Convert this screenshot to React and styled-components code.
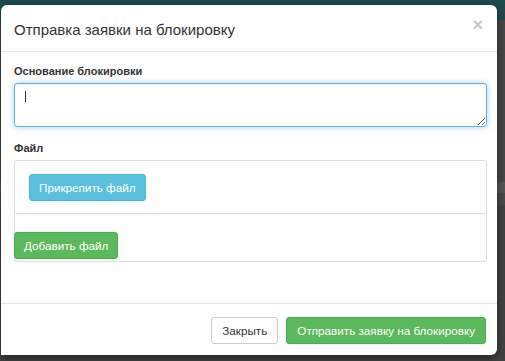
import styled, { createGlobalStyle } from "styled-components";

const GlobalStyle = createGlobalStyle`
  html, body {
    margin: 0;
    height: 100%;
  }
  body {
    font-family: "Liberation Sans", Arial, sans-serif;
    color: #333;
    background:
      linear-gradient(#1e4b4d 0, #1e4b4d 20px, transparent 20px),
      linear-gradient(#474747 0, #474747 182px, #555 182px, #555 193px, #4a4a4a 193px, #4a4a4a 205px, #424242 205px);
    overflow: hidden;
  }
`;

const Backdrop = styled.div`
  padding: 5px 0 0 1px;
`;

const Modal = styled.div`
  width: 496px;
  height: 350px;
  background: #fff;
  border-radius: 6px 6px 6px 0;
  box-shadow: 0 3px 9px rgba(0, 0, 0, 0.5);
  display: flex;
  flex-direction: column;
  box-sizing: border-box;
`;

const Header = styled.div`
  display: flex;
  align-items: center;
  justify-content: space-between;
  height: 46px;
  padding: 0 14px 0 13px;
  border-bottom: 1px solid #e5e5e5;
`;

const Title = styled.h4`
  margin: 0;
  font-size: 15px;
  font-weight: normal;
  color: #333;
  padding-top: 3px;
`;

const CloseButton = styled.button`
  border: 0;
  background: none;
  padding: 0;
  font-family: inherit;
  font-size: 18px;
  font-weight: bold;
  line-height: 1;
  color: #c8c8c8;
  margin-top: -7px;
  cursor: pointer;
`;

const Body = styled.div`
  flex: 1;
  padding: 12px 12px 0 13px;
`;

const Group = styled.div`
  margin-bottom: ${(p) => p.$gap || 0}px;
`;

const Label = styled.label`
  display: block;
  font-size: 11px;
  font-weight: bold;
  line-height: 14px;
  margin-bottom: 5px;
`;

const TextArea = styled.textarea`
  display: block;
  box-sizing: border-box;
  width: 473px;
  height: 44px;
  border: 1px solid #66afe9;
  border-radius: 3px;
  box-shadow: inset 0 1px 1px rgba(0, 0, 0, 0.075), 0 0 6px rgba(102, 175, 233, 0.6);
  outline: none;
  padding: 6px 10px;
  font-family: inherit;
  font-size: 12px;
  resize: vertical;
`;

const Caret = styled.span`
  display: block;
  width: 1px;
  height: 11px;
  background: #333;
  margin: 1px 0 0 0;
`;

const FieldWrap = styled.div`
  position: relative;
`;

const CaretSpot = styled.div`
  position: absolute;
  left: 11px;
  top: 7px;
`;

const FilePanel = styled.div`
  width: 473px;
  box-sizing: border-box;
  border: 1px solid #ddd;
  border-radius: 3px;
  display: flex;
  flex-direction: column;
  gap: 18px;
`;

const InnerPanel = styled.div`
  border-bottom: 1px solid #ddd;
  border-radius: 0 0 3px 3px;
  box-shadow: 0 1px 1px rgba(0, 0, 0, 0.05);
  padding: 13px 14px 12px;
`;

const Button = styled.button`
  font-family: inherit;
  font-size: 11.7px;
  line-height: 17px;
  height: 27px;
  padding: 0 ${(p) => p.$pad || 10}px;
  border-radius: 3px;
  border: 1px solid ${(p) => p.$border};
  background: ${(p) => p.$bg};
  color: ${(p) => p.$color || "#fff"};
  cursor: pointer;
  white-space: nowrap;
`;

const AddButton = styled(Button)`
  align-self: flex-start;
  margin: 0 0 2px -1px;
`;

const Footer = styled.div`
  height: 52px;
  box-sizing: border-box;
  border-top: 1px solid #e5e5e5;
  padding: 13px 11px 0;
  display: flex;
  justify-content: flex-end;
  gap: 8px;
`;

export default function App() {
  return (
    <>
      <GlobalStyle />
      <Backdrop>
        <Modal>
          <Header>
            <Title>Отправка заявки на блокировку</Title>
            <CloseButton>×</CloseButton>
          </Header>
          <Body>
            <Group $gap={14}>
              <Label>Основание блокировки</Label>
              <FieldWrap>
                <TextArea />
                <CaretSpot>
                  <Caret />
                </CaretSpot>
              </FieldWrap>
            </Group>
            <Group>
              <Label>Файл</Label>
              <FilePanel>
                <InnerPanel>
                  <Button $bg="#5bc0de" $border="#46b8da" $pad={9}>
                    Прикрепить файл
                  </Button>
                </InnerPanel>
                <AddButton $bg="#5cb85c" $border="#4cae4c" $pad={9}>
                  Добавить файл
                </AddButton>
              </FilePanel>
            </Group>
          </Body>
          <Footer>
            <Button $bg="#fff" $border="#ccc" $color="#333">
              Закрыть
            </Button>
            <Button $bg="#5cb85c" $border="#4cae4c">
              Отправить заявку на блокировку
            </Button>
          </Footer>
        </Modal>
      </Backdrop>
    </>
  );
}
